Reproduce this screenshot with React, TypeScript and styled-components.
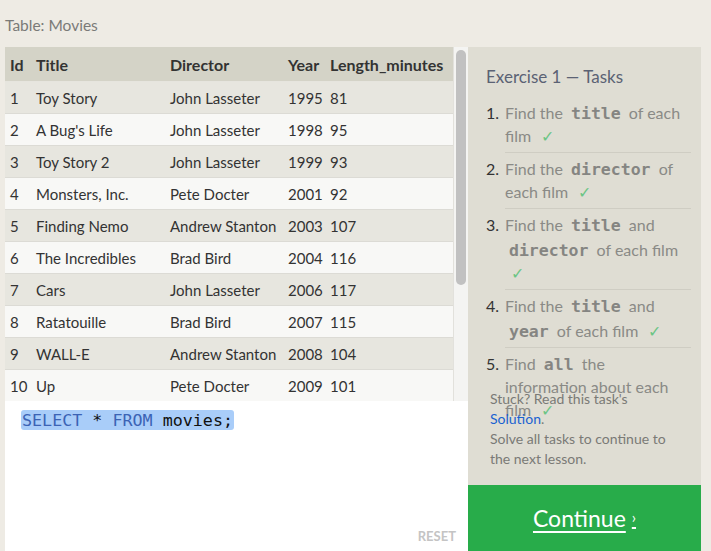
import React from "react";
import styled, { createGlobalStyle } from "styled-components";

const Global = createGlobalStyle`
  html, body { margin: 0; padding: 0; }
  body {
    background: #eeebe4;
    font-family: Lato, "Open Sans", sans-serif;
    overflow: hidden;
    height: 551px;
  }
`;

const Page = styled.div`
  width: 711px;
  height: 551px;
  padding-left: 5px;
  box-sizing: border-box;
  display: flex;
  flex-direction: column;
`;

const PageTitle = styled.div`
  height: 47px;
  display: flex;
  align-items: center;
  padding-top: 2px;
  box-sizing: border-box;
  font-size: 15.5px;
  color: #7a7a78;
`;

const Main = styled.div`
  display: flex;
  flex: 1;
  min-height: 0;
`;

const LeftCol = styled.div`
  width: 463px;
  display: flex;
  flex-direction: column;
`;

const TableArea = styled.div`
  height: 354px;
  display: flex;
  overflow: hidden;
`;

const Table = styled.table`
  width: 448px;
  border-collapse: collapse;
  table-layout: fixed;
  font-size: 15px;
  color: #333;
`;

const Th = styled.th<{ $w: number }>`
  width: ${(p) => p.$w}px;
  height: 34px;
  padding: 0 0 0 5px;
  text-align: left;
  font-weight: 700;
  font-size: 16px;
  background: #d4d3c7;
  color: #333;
  white-space: nowrap;
  overflow: visible;
  border-bottom: 1px solid #e6e5de;
`;

const Tr = styled.tr<{ $odd: boolean }>`
  background: ${(p) => (p.$odd ? "#e7e6df" : "#f8f8f6")};
`;

const Td = styled.td`
  height: 31px;
  padding: 0 0 0 5px;
  border-bottom: 1px solid #dcdbd5;
  white-space: nowrap;
`;

const ScrollTrack = styled.div`
  width: 15px;
  background: #f4f4f2;
  border-left: 1px solid #e2e1dc;
  box-sizing: border-box;
  padding: 3px 2px 0 2px;
`;

const ScrollThumb = styled.div`
  height: 235px;
  border-radius: 5px;
  background: #c1c1c1;
`;

const Editor = styled.div`
  flex: 1;
  background: #ffffff;
  display: flex;
  flex-direction: column;
  justify-content: space-between;
  padding: 9px 12px 7px 16px;
  box-sizing: border-box;
`;

const CodeLine = styled.div`
  font-family: "DejaVu Sans Mono", monospace;
  font-size: 16.7px;
  line-height: 20px;
`;

const Selected = styled.span`
  background: #a9cdf9;
  border-radius: 3px;
  padding: 0 1px;
`;

const Kw = styled.span`
  color: #3b63b5;
`;

const Ident = styled.span`
  color: #111;
`;

const Reset = styled.div`
  align-self: flex-end;
  font-size: 13px;
  font-weight: 700;
  color: #c4c4c4;
`;

const RightPanel = styled.div`
  width: 233px;
  background: #dfddd3;
  display: flex;
  flex-direction: column;
`;

const Tasks = styled.div`
  flex: 1;
  min-height: 0;
  padding: 19px 14px 0 18px;
`;

const TasksTitle = styled.div`
  font-size: 17px;
  line-height: 22px;
  color: #5b6274;
  margin-bottom: 9px;
`;

const TaskList = styled.ol`
  margin: 0;
  padding: 0;
  list-style: none;
`;

const TaskItem = styled.li<{ $last?: boolean }>`
  display: flex;
  padding: 2px 0 6px 0;
  position: relative;
  &::after {
    content: "";
    display: ${(p) => (p.$last ? "none" : "block")};
    position: absolute;
    left: 19px;
    right: -4px;
    bottom: 0;
    border-bottom: 1px solid #cfcdc3;
  }
`;

const TaskNum = styled.span`
  width: 19px;
  flex: none;
  font-size: 16px;
  line-height: 23px;
  padding-top: 2px;
  color: #333;
`;

const TaskText = styled.span`
  flex: 1;
  min-width: 0;
  font-size: 16px;
  line-height: 23px;
  color: #8a8a86;
`;

const Code = styled.code`
  display: inline-block;
  font-family: "DejaVu Sans Mono", monospace;
  font-weight: 700;
  font-size: 16.5px;
  line-height: 1;
  padding: 7px 4px 0 4px;
  color: #858582;
`;

const Check = styled.span`
  color: #6cc585;
  margin-left: 6px;
`;

const Footer = styled.div`
  padding: 0 20px 16px 22px;
  font-size: 14px;
  line-height: 20px;
  color: #7a7a76;
  position: relative;
`;

const SolutionLink = styled.a`
  color: #1a62d1;
  text-decoration: none;
`;

const ContinueButton = styled.a`
  height: 66px;
  background: #28ac4a;
  display: flex;
  align-items: center;
  justify-content: center;
  color: #fff;
  font-size: 23px;
  text-decoration: underline;
  text-underline-offset: 4px;
  text-decoration-thickness: 2px;
`;

const Chevron = styled.span`
  font-size: 15px;
  margin-left: 6px;
  position: relative;
  top: -1px;
`;

const movies = [
  [1, "Toy Story", "John Lasseter", 1995, 81],
  [2, "A Bug's Life", "John Lasseter", 1998, 95],
  [3, "Toy Story 2", "John Lasseter", 1999, 93],
  [4, "Monsters, Inc.", "Pete Docter", 2001, 92],
  [5, "Finding Nemo", "Andrew Stanton", 2003, 107],
  [6, "The Incredibles", "Brad Bird", 2004, 116],
  [7, "Cars", "John Lasseter", 2006, 117],
  [8, "Ratatouille", "Brad Bird", 2007, 115],
  [9, "WALL-E", "Andrew Stanton", 2008, 104],
  [10, "Up", "Pete Docter", 2009, 101],
];

const cols: [string, number][] = [
  ["Id", 21],
  ["Title", 129],
  ["Director", 113],
  ["Year", 37],
  ["Length_minutes", 123],
];

export default function App() {
  return (
    <>
      <Global />
      <Page>
        <PageTitle>Table: Movies</PageTitle>
        <Main>
          <LeftCol>
            <TableArea>
              <Table>
                <thead>
                  <tr>
                    {cols.map(([c, w]) => (
                      <Th key={c} $w={w}>
                        {c}
                      </Th>
                    ))}
                  </tr>
                </thead>
                <tbody>
                  {movies.map((m, i) => (
                    <Tr key={i} $odd={i % 2 === 0}>
                      {m.map((v, j) => (
                        <Td key={j}>{v}</Td>
                      ))}
                    </Tr>
                  ))}
                </tbody>
              </Table>
              <ScrollTrack>
                <ScrollThumb />
              </ScrollTrack>
            </TableArea>
            <Editor>
              <CodeLine>
                <Selected>
                  <Kw>SELECT</Kw> <Ident>*</Ident> <Kw>FROM</Kw>{" "}
                  <Ident>movies;</Ident>
                </Selected>
              </CodeLine>
              <Reset>RESET</Reset>
            </Editor>
          </LeftCol>
          <RightPanel>
            <Tasks>
              <TasksTitle>Exercise 1 — Tasks</TasksTitle>
              <TaskList>
                <TaskItem>
                  <TaskNum>1.</TaskNum>
                  <TaskText>
                    Find the <Code>title</Code> of each film{" "}
                    <Check>✓</Check>
                  </TaskText>
                </TaskItem>
                <TaskItem>
                  <TaskNum>2.</TaskNum>
                  <TaskText>
                    Find the <Code>director</Code> of each film{" "}
                    <Check>✓</Check>
                  </TaskText>
                </TaskItem>
                <TaskItem>
                  <TaskNum>3.</TaskNum>
                  <TaskText>
                    Find the <Code>title</Code> and <Code>director</Code> of
                    each film <Check>✓</Check>
                  </TaskText>
                </TaskItem>
                <TaskItem>
                  <TaskNum>4.</TaskNum>
                  <TaskText>
                    Find the <Code>title</Code> and <Code>year</Code> of each
                    film <Check>✓</Check>
                  </TaskText>
                </TaskItem>
                <TaskItem $last>
                  <TaskNum>5.</TaskNum>
                  <TaskText>
                    Find <Code>all</Code> the information about each film{" "}
                    <Check>✓</Check>
                  </TaskText>
                </TaskItem>
              </TaskList>
            </Tasks>
            <Footer>
              Stuck? Read this task's
              <br />
              <SolutionLink href="#">Solution</SolutionLink>.
              <br />
              Solve all tasks to continue to the next lesson.
            </Footer>
            <ContinueButton href="#">
              Continue<Chevron>›</Chevron>
            </ContinueButton>
          </RightPanel>
        </Main>
      </Page>
    </>
  );
}
